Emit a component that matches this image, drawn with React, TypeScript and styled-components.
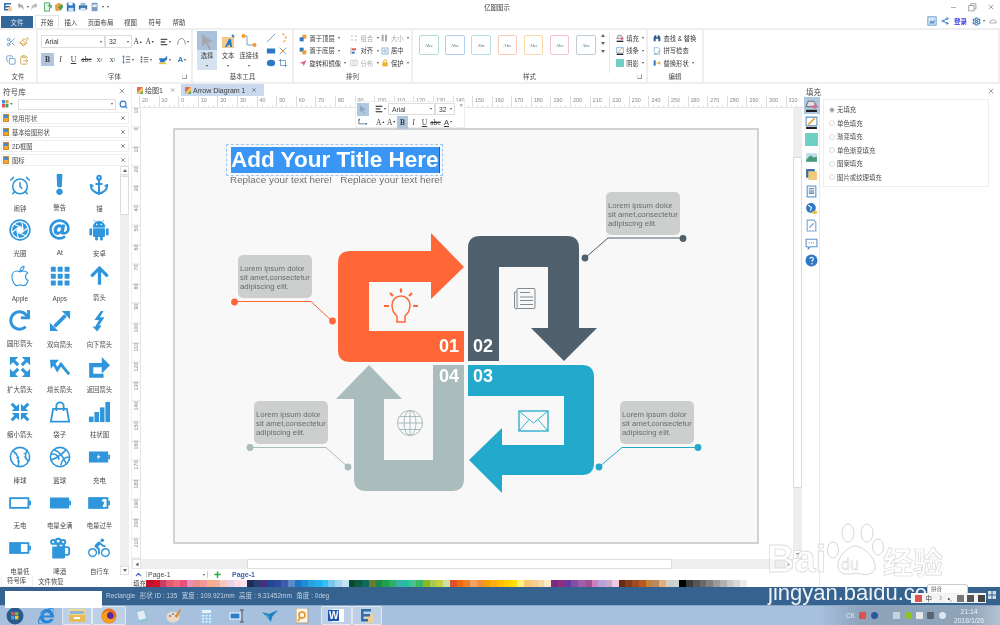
import React from "react";
import styled, { createGlobalStyle } from "styled-components";
import { AlarmClock, Anchor, Scissors, Paintbrush, Copy, ClipboardPaste, Search, X, Settings, Share2, ChevronUp, Plus, Minus } from "lucide-react";
import { FaExclamation, FaAt, FaApple, FaArrowUp, FaRedo, FaInternetExplorer } from "react-icons/fa";
import { MdDirectionsBike } from "react-icons/md";

const CJK = `"Liberation Sans", "Noto Sans CJK SC", sans-serif`;
const BLUE = "#2f96dc";

const Global = createGlobalStyle`
  html, body { margin: 0; padding: 0; background: #fff; }
  body { font-family: ${CJK}; width: 1000px; height: 625px; overflow: hidden; }
  * { box-sizing: border-box; }
`;

const Root = styled.div`
  position: relative; width: 1000px; height: 625px; overflow: hidden;
  display: flex; flex-direction: column; background: #fff; color: #3a3a3a;
  font-size: 6.4px; filter: blur(0.35px);
`;

/* ---------- title bar ---------- */
const TitleBar = styled.div`
  height: 14px; display: grid; grid-template-columns: 1fr auto 1fr; align-items: center; padding: 0 8px 0 2px; flex: none;
`;
const QuickBar = styled.div`
  display: flex; align-items: center;
`;
const QuickIcon = styled.span`
  width: 12px; height: 12px; display: inline-flex; align-items: center; justify-content: center; flex: none;
`;
const AppTitle = styled.div`
  font-size: 6.4px; color: #3a3a3a;
`;
const WinControls = styled.div`
  display: flex; color: #777; align-items: center; gap: 7px; justify-content: flex-end; margin-right: -5px;
`;
const WinBtn = styled.span`
  width: 12px; height: 12px; display: inline-flex; align-items: center; justify-content: center;
`;

/* ---------- tab row ---------- */
const TabRow = styled.div`
  height: 14px; display: flex; align-items: flex-end; flex: none; padding-left: 1px; font-size: 6.4px;
`;
const FileTab = styled.div`
  width: 32px; height: 12px; background: #336699; color: #dfe8f0; display: flex; align-items: center; justify-content: center;
`;
const MenuTab = styled.div<{ $active?: boolean; $w: number }>`
  width: ${(p) => p.$w}px; height: ${(p) => (p.$active ? 13 : 12)}px; display: flex; align-items: center; justify-content: center;
  color: #3a3a3a; background: #fff;
  ${(p) => p.$active && "border: 1px solid #e4e4e4; border-bottom: none;"}
`;
const RightTools = styled.div`
  margin-left: auto; display: flex; align-items: center; height: 14px; padding-right: 3px; color: #3f7fbf; gap: 4px;
`;
const Login = styled.span`
  color: #4343e6; font-weight: bold; font-size: 6.5px; margin: 0 1px;
`;

/* ---------- ribbon ---------- */
const Ribbon = styled.div`
  height: 56px; display: flex; border-top: 2px solid #efefef; border-bottom: 2px solid #efefef; flex: none;
`;
const Group = styled.div<{ $w?: number }>`
  ${(p) => (p.$w ? `width: ${p.$w}px; flex: none;` : "flex: 1;")}
  display: flex; flex-direction: column; border-right: 2px solid #efefef;
`;
const GroupBody = styled.div`
  flex: 1; display: flex; min-height: 0;
`;
const GroupLabel = styled.div`
  height: 12px; flex: none; display: grid; grid-template-columns: 1fr auto 1fr; align-items: center;
  color: #4a4a4a; font-size: 6.4px;
`;
const Launcher = styled.span`
  justify-self: end; margin-right: 4px; width: 5px; height: 5px; border: 1px solid #999; border-top-color: transparent; border-left-color: #ddd;
`;
const IconGrid = styled.div`
  display: grid; grid-template-columns: 13px 13px; grid-auto-rows: 18px; padding: 3px 0 0 4px; align-items: center; justify-items: center; color: #5b93c9;
`;
const SmallShapes = styled(IconGrid)`
  padding: 2px 0 0 6px; grid-auto-rows: 12.6px; grid-template-columns: 12px 12px;
`;
const FontRows = styled.div`
  display: flex; flex-direction: column; gap: 5px; padding: 5px 0 0 3px;
`;
const FontRow = styled.div`
  display: flex; align-items: center; height: 13px;
`;
const Combo = styled.div<{ $w: number; $h?: number }>`
  width: ${(p) => p.$w}px; height: ${(p) => p.$h ?? 13}px; border: 1px solid #ddd; background: #fff; display: flex; align-items: center;
  justify-content: space-between; padding: 0 2px 0 3px; font-size: 6.8px; color: #3a3a3a; flex: none;
`;
const Caret = styled.i<{ $ml?: number; $mr?: number }>`
  display: inline-block; width: 0; height: 0; border-left: 1.6px solid transparent; border-right: 1.6px solid transparent;
  border-top: 2px solid #555; margin-left: ${(p) => p.$ml ?? 1}px; margin-right: ${(p) => p.$mr ?? 0}px; flex: none;
`;
const FmtBtn = styled.span<{ $w?: number; $on?: boolean; $bold?: boolean; $it?: boolean; $u?: boolean; $strike?: boolean; $sans?: boolean; $c?: string }>`
  width: ${(p) => p.$w ?? 13}px; height: 13px; display: inline-flex; align-items: center; justify-content: center; flex: none;
  background: ${(p) => (p.$on ? "#aec6de" : "transparent")}; color: ${(p) => p.$c ?? "#3a3a3a"}; font-size: 7.5px;
  font-weight: ${(p) => (p.$bold ? "bold" : "normal")}; font-style: ${(p) => (p.$it ? "italic" : "normal")};
  text-decoration: ${(p) => (p.$u ? "underline" : p.$strike ? "line-through" : "none")};
  font-family: ${(p) => (p.$sans ? `"Liberation Sans", sans-serif` : `"Liberation Serif", serif`)};
`;
const Mini = styled.sup`
  font-size: 3.5px; line-height: 0;
`;
const Lower = styled.sub`
  font-size: 4px; line-height: 0;
`;
const BigTools = styled.div`
  display: flex; padding: 1px 0 0 4px;
`;
const BigTool = styled.div<{ $w: number; $on?: boolean }>`
  width: ${(p) => p.$w}px; height: 39px; display: flex; flex-direction: column; align-items: center; color: #3a3a3a; font-size: 6.3px;
  background: ${(p) => (p.$on ? "linear-gradient(#a9c1da 0 19px, #d5e2ef 19px)" : "transparent")};
`;
const BigIcon = styled.div`
  height: 20px; width: 100%; display: flex; align-items: center; justify-content: center;
`;
const BigText = styled.div`
  height: 10px; line-height: 10px; white-space: nowrap;
`;
const BigCaret = styled.div`
  height: 9px; display: flex; align-items: center; justify-content: center;
`;
const TriCols = styled.div`
  display: grid; grid-template-columns: 51px 30.5px 30px; grid-auto-rows: 12.6px; padding: 2px 0 0 5px; align-items: center;
`;
const LabelledTool = styled.div<{ $off?: boolean }>`
  display: flex; align-items: center; gap: 2.5px; font-size: 6.3px; white-space: nowrap; color: ${(p) => (p.$off ? "#aaa" : "#3a3a3a")};
`;
const StyleRow = styled.div`
  display: flex; gap: 6.7px; padding: 5px 0 0 6px;
`;
const StyleBox = styled.div<{ $c: string }>`
  width: 19.5px; height: 20px; border: 1px solid ${(p) => p.$c}; border-radius: 2px; display: flex; align-items: center; justify-content: center;
  font-size: 4.6px; color: #7b9aa8; font-weight: bold; font-family: "Liberation Serif", serif;
`;
const StyleScroll = styled.div`
  width: 12px; padding: 4px 0 0 5px; display: flex; flex-direction: column; gap: 5px;
`;
const StyleDot = styled.i<{ $up?: boolean; $turn?: number }>`
  display: block; width: 0; height: 0; border-left: 2px solid transparent; border-right: 2px solid transparent;
  ${(p) => (p.$up ? "border-bottom: 3px solid #666;" : "border-top: 3px solid #666;")}
  transform: rotate(${(p) => p.$turn ?? 0}deg);
`;
const VSep = styled.div`
  width: 1px; height: 40px; background: #e6e6e6; margin: 3px 0 0 1px;
`;
const ToolCol = styled.div<{ $pad: string }>`
  display: grid; grid-auto-rows: 12.6px; padding: ${(p) => p.$pad}; align-items: center;
`;

/* ---------- workspace ---------- */
const Workspace = styled.div`
  flex: 1; min-height: 0; display: flex; position: relative;
`;
const LeftPanel = styled.div`
  width: 132px; flex: none; display: flex; flex-direction: column; border-right: 1px solid #f0f0f0;
`;
const PanelHead = styled.div`
  height: 13px; flex: none; display: flex; align-items: center; justify-content: space-between; padding: 1px 5px 0 3px; font-size: 7.6px; color: #4a4a4a;
`;
const SearchRow = styled.div`
  height: 14px; flex: none; display: flex; align-items: center; padding: 0 3px 0 2px;
`;
const SearchBox = styled.div`
  width: 99px; height: 11px; margin-left: 4px; border: 1px solid #ddd; display: flex; justify-content: flex-end; align-items: center; padding-right: 2px;
`;
const SearchGlyph = styled(Search)`
  margin-left: 3px;
`;
const CatList = styled.div`
  padding-top: 1px; display: flex; flex-direction: column; gap: 2px; flex: none;
`;
const CatRow = styled.div`
  height: 12px; margin: 0 2px 0 1px; display: flex; align-items: center; gap: 3px; border: 1px solid #eee; background: #fff; font-size: 6.3px; color: #4a4a4a; padding: 0 2px 0 1px;
`;
const CatName = styled.span`
  flex: 1;
`;
const CatIcon = styled.i`
  width: 6px; height: 8px; background: linear-gradient(#3c8fd6 0 55%, #f3a63b 55%); display: block; flex: none; border: 1px solid #c88a2c;
`;
const SymbolArea = styled.div`
  flex: 1; min-height: 0; display: flex;
`;
const SymbolGrid = styled.div`
  width: 120px; flex: none; display: grid; grid-template-columns: repeat(3, 39.8px); grid-auto-rows: 45.4px;
`;
const SymbolCell = styled.div`
  display: flex; flex-direction: column; align-items: center; padding-top: 8px; color: #4a4a4a; font-size: 6.4px;
`;
const SymbolIcon = styled.div`
  width: 22px; height: 22px; color: ${BLUE}; display: flex; align-items: center; justify-content: center;
`;
const SymbolLabel = styled.div`
  margin-top: 7.5px; white-space: nowrap; line-height: 9px;
`;
const VScroll = styled.div<{ $mr?: number }>`
  width: 9px; flex: none; background: #eeeeee; display: flex; flex-direction: column; align-items: stretch; margin-right: ${(p) => p.$mr ?? 0}px;
`;
const ScrollBtn = styled.div<{ $end?: boolean }>`
  height: 9px; background: #fff; border: 1px solid #e0e0e0; display: flex; align-items: center; justify-content: center; flex: none;
  ${(p) => p.$end && "margin-top: auto;"}
`;
const ScrollThumb = styled.div<{ $mt: number; $h: number }>`
  margin-top: ${(p) => p.$mt}px; height: ${(p) => p.$h}px; background: #fff; border: 1px solid #dcdcdc; flex: none;
`;
const BottomTabs = styled.div`
  height: 12px; flex: none; display: flex; align-items: center; font-size: 6.4px; color: #4a4a4a;
`;
const BottomTab = styled.div<{ $on?: boolean }>`
  height: 12px; display: flex; align-items: center; padding: 0 6px 0 5px;
  ${(p) => p.$on && "border: 1px solid #eee; border-top: none; background: #fff; margin-left: 1px;"}
`;

/* ---------- centre ---------- */
const Centre = styled.div`
  width: 672px; flex: none; display: flex; flex-direction: column; position: relative;
`;
const DocTabs = styled.div`
  height: 12px; flex: none; display: flex; font-size: 7px; padding-left: 3px; color: #3a3a3a;
`;
const DocTab = styled.div<{ $w: number; $on?: boolean; $pl: number }>`
  width: ${(p) => p.$w}px; height: 12px; display: flex; align-items: center; padding-left: ${(p) => p.$pl}px; gap: 2px;
  margin-right: 6px; background: ${(p) => (p.$on ? "#c9d9ee" : "transparent")}; white-space: nowrap;
`;
const DocIcon = styled.i`
  display: block; width: 6px; height: 7px; background: linear-gradient(135deg, #e06a5c 0 40%, #f0c060 40% 70%, #6aa860 70%); flex: none;
`;
const DocClose = styled(X)<{ $ml: number }>`
  margin-left: ${(p) => p.$ml}px;
`;
const RulerH = styled.div`
  height: 12px; flex: none; display: flex; overflow: hidden; padding-left: 7px; border-bottom: 1px solid #e5e5e5;
`;
const RulerCell = styled.div`
  width: 19.6px; flex: none; height: 12px; border-left: 1px solid #ddd; font-size: 5.4px; color: #888; padding: 1px 0 0 2px; line-height: 7px;
  background: repeating-linear-gradient(90deg, transparent 0 3.9px, #e4e4e4 3.9px 4.9px) 0 9px / 100% 3px no-repeat;
`;
const Middle = styled.div`
  flex: 1; min-height: 0; display: flex; 
`;
const RulerV = styled.div`
  width: 9px; flex: none; overflow: hidden; border-right: 1px solid #e5e5e5; display: flex; flex-direction: column;
`;
const RulerVCell = styled.div`
  height: 19.6px; flex: none; border-top: 1px solid #ddd; font-size: 5.4px; color: #888; writing-mode: vertical-rl; transform: rotate(180deg);
  line-height: 9px; text-align: right;
`;
const CanvasArea = styled.div`
  flex: 1; min-width: 0; padding: 20px 0 0 32px; background: #fff;
`;
const Page = styled.div`
  position: relative; width: 586px; height: 416px; background: #f8f8f8; border: 2px solid #d2d2d2; overflow: hidden;
`;
const DiagramSvg = styled.svg`
  position: absolute; left: -2px; top: -2px; width: 586px; height: 416px;
`;
const Callout = styled.div<{ $x: number; $y: number }>`
  position: absolute; left: ${(p) => p.$x - 175}px; top: ${(p) => p.$y - 130}px; width: 74px; height: 43px;
  background: #cdcfcf; border-radius: 5px; padding: 9px 0 0 2px; font-size: 7.8px; line-height: 9px; color: #6b6b6b; white-space: nowrap;
`;
const StepNum = styled.div<{ $x: number; $y: number }>`
  position: absolute; left: ${(p) => p.$x - 175}px; top: ${(p) => p.$y - 130}px; width: 30px; height: 20px; text-align: center;
  color: #fff; font-weight: bold; font-size: 18px; line-height: 20px;
`;
const TitleFrame = styled.div`
  position: absolute; left: 51px; top: 14px; width: 217px; height: 32px; border: 1px dashed #9cc7f0; padding: 2px 0 0 4px;
`;
const TitleText = styled.span`
  display: inline-block; height: 26px; line-height: 26px; font-size: 22.5px; font-weight: bold; color: #fff; background: #3a96f5; border-right: 1px solid #555;
  white-space: nowrap;
`;
const SubTitle = styled.div`
  position: absolute; left: 55px; top: 44px; font-size: 9.9px; line-height: 12px; color: #707070; white-space: pre;
`;
const MiniBar = styled.div`
  position: absolute; left: 223px; top: 17px; width: 110px; height: 27px; background: #fff; border: 1px solid #eee; display: grid;
  grid-template-columns: 14px 1fr; z-index: 3;
`;
const MiniLeft = styled.div`
  display: flex; flex-direction: column;
`;
const MiniSel = styled.div`
  width: 12px; height: 13px; background: #aec6de; margin: 1px 0 0 1px; display: flex; align-items: center; justify-content: center;
`;
const MiniRight = styled.div`
  display: flex; flex-direction: column; padding: 1px 0 0 5px; gap: 1px;
`;
const MiniRow = styled.div`
  display: flex; align-items: center; height: 12px; font-size: 7px; color: #3a3a3a;
`;
const MiniClose = styled.span`
  position: absolute; right: 1px; top: 0; color: #777; font-size: 6px; line-height: 6px;
`;
const HScrollRow = styled.div`
  height: 10px; flex: none; display: flex; background: #eee; margin-right: 11px;
`;
const HArrow = styled.div`
  width: 9px; height: 10px; display: flex; align-items: center; justify-content: center; background: #fff; border: 1px solid #e4e4e4;
`;
const HThumb = styled.div`
  width: 425px; height: 10px; background: #fff; border: 1px solid #ddd; margin: 0 auto 0 106px;
`;
const PageBar = styled.div`
  height: 11px; flex: none; display: flex; align-items: center; padding-left: 2px; font-size: 7px; color: #4a4a4a;
`;
const PageCombo = styled.div`
  width: 62px; display: flex; justify-content: space-between; align-items: center; margin-left: 3px; border-left: 1px solid #ccc; border-right: 1px solid #ccc; padding: 0 2px 0 1px;
`;
const PagePlus = styled(Plus)`
  margin-left: 5px;
`;
const PageName = styled.span`
  color: #3f62b8; font-weight: bold; margin-left: 10px;
`;
const PaletteRow = styled.div`
  height: 7px; flex: none; display: flex; align-items: center;
`;
const PaletteLabel = styled.span`
  width: 14px; font-size: 6.4px; line-height: 7px; padding-left: 1px; color: #3a3a3a; flex: none; white-space: nowrap;
`;
const Swatch = styled.i<{ $c: string }>`
  width: 6.76px; height: 7px; flex: none; display: block; background: ${(p) => p.$c};
`;

/* ---------- right panel ---------- */
const RightPanel = styled.div`
  flex: 1; display: flex; flex-direction: column; min-width: 0;
`;
const RightHead = styled.div`
  height: 13px; flex: none; display: flex; align-items: center; justify-content: space-between; padding: 1px 5px 0 2px; font-size: 7.5px; color: #4a4a4a;
`;
const RightBody = styled.div`
  flex: 1; display: flex; min-height: 0;
`;
const Strip = styled.div`
  width: 16px; flex: none; border-right: 1px solid #eaeaea; display: flex; flex-direction: column; align-items: center;
`;
const StripBtn = styled.div<{ $on?: boolean }>`
  width: 16px; height: 17.2px; flex: none; display: flex; align-items: center; justify-content: center;
  background: ${(p) => (p.$on ? "#aec6de" : "transparent")};
`;
const FillOptions = styled.div`
  margin: 2px 0 0 3px; width: 166px; height: 88px; border: 1px solid #efefef; display: flex; flex-direction: column; padding: 3px 0 0 5px;
`;
const FillRow = styled.div`
  height: 13.5px; display: flex; align-items: center; gap: 2px; font-size: 6.4px; color: #4a4a4a;
`;
const Radio = styled.i<{ $on?: boolean }>`
  display: block; width: 6px; height: 6px; border-radius: 50%; border: 1px solid #ddd; background: ${(p) => (p.$on ? "radial-gradient(#999 0 1.5px, #eee 2px)" : "#fff")};
`;

/* ---------- status + taskbar ---------- */
const StatusBar = styled.div`
  height: 18px; flex: none; background: #35628f; display: flex; align-items: center; padding-left: 106px; color: #c3d2e2; font-size: 6.5px; gap: 4.5px;
  white-space: nowrap; padding-bottom: 2px;
`;
const StatusRight = styled.div`
  margin-left: auto; display: flex; align-items: center; padding-right: 4px;
`;
const Taskbar = styled.div`
  height: 20px; flex: none; display: flex; align-items: center; border-top: 1px solid #8ba6c3;
  background: linear-gradient(90deg, #a7c0dd 0 82%, #8da4bb 86%, #8ea3b8 97%, #b6c4d2);
`;
const TaskItem = styled.div<{ $on?: boolean; $w?: number; $ml?: number }>`
  width: ${(p) => p.$w ?? 32}px; height: 19px; margin-left: ${(p) => p.$ml ?? 0}px; flex: none; display: flex; align-items: center; justify-content: center;
  ${(p) => p.$on && "background: rgba(255,255,255,.25); border: 1px solid rgba(255,255,255,.55); border-radius: 2px;"}
`;
const Tray = styled.div`
  margin-left: auto; display: flex; align-items: center; color: #e8eef3; font-size: 6.4px;
`;
const TrayText = styled.span`
  margin-right: 2px;
`;
const TrayDot = styled.i<{ $c: string; $sq?: boolean }>`
  display: block; width: 7px; height: 7px; margin: 0 2.2px; background: ${(p) => p.$c}; border-radius: ${(p) => (p.$sq ? "1px" : "50%")};
`;
const Clock = styled.div`
  width: 40px; margin: 0 11px 0 1px; text-align: center; line-height: 9px; font-size: 6.8px; color: #eef2f6;
`;

/* ---------- overlays ---------- */
const Redact = styled.div`
  position: absolute; left: 5px; top: 591px; width: 97px; height: 17px; background: #fff; z-index: 5;
`;
const Mark = styled.div`
  position: absolute; left: 0; top: 0; width: 1000px; height: 625px; pointer-events: none; z-index: 6;
`;
const PawSvg = styled.svg`
  position: absolute; left: 826px; top: 519px; width: 60px; height: 60px;
`;
const MarkBai = styled.div`
  position: absolute; left: 767px; top: 538px; font-size: 38px; line-height: 42px; font-weight: bold; color: rgba(255,255,255,.55);
  -webkit-text-stroke: .8px #dcdcdc;
`;
const MarkDu = styled.div`
  position: absolute; left: 841px; top: 556px; font-size: 16px; line-height: 18px; color: rgba(255,255,255,.6); -webkit-text-stroke: .6px #d8d8d8;
`;
const MarkCn = styled.div`
  position: absolute; left: 883px; top: 543px; font-size: 30px; line-height: 34px; color: rgba(255,255,255,.6); -webkit-text-stroke: .7px #d8d8d8; white-space: nowrap;
  font-family: "Noto Sans CJK SC", sans-serif; font-weight: bold;
`;
const MarkUrl = styled.div`
  position: absolute; left: 768px; top: 580px; font-size: 22px; line-height: 26px; color: rgba(255,255,255,.92); white-space: nowrap;
`;
const ImeTip = styled.div`
  position: absolute; left: 927px; top: 584px; width: 41px; height: 10px; background: #fff; border: 1px solid #ccc; border-radius: 2px; font-size: 5.5px; line-height: 8px; padding-left: 3px; color: #666; z-index: 7;
`;
const ImeBar = styled.div`
  position: absolute; left: 911px; top: 593px; width: 75px; height: 10px; background: #f4f4f4; z-index: 7; display: flex; align-items: center; padding-left: 2px; font-size: 6.4px; color: #3a3a3a;
`;
const ImeCell = styled.span`
  width: 10.5px; display: flex; justify-content: center; align-items: center; flex: none;
`;
const ImeDot = styled.i<{ $c: string }>`
  display: block; width: 7px; height: 7px; background: ${(p) => p.$c};
`;

/* ---------- small drawn icons ---------- */
const Tiny = ({ c = "#5b93c9", s = 8, children }: { c?: string; s?: number; children: React.ReactNode }) => (
  <svg width={s} height={s} viewBox="0 0 12 12" fill={c} stroke="none" style={{ flex: "none" }}>{children}</svg>
);
const FrontIcon = () => <Tiny><rect x="5" y="1" width="6" height="6" fill="#e9a23b" /><rect x="1" y="5" width="6" height="6" fill="#2f78c4" /></Tiny>;
const BackIcon = () => <Tiny><rect x="1" y="1" width="6" height="6" fill="#2f78c4" /><rect x="5" y="5" width="6" height="6" fill="#e9a23b" /></Tiny>;

const Grid9 = () => (
  <svg viewBox="0 0 24 24" width="22" height="22" fill="currentColor">
    {[2, 9.5, 17].flatMap((y) => [2, 9.5, 17].map((x) => <rect key={x + "," + y} x={x} y={y} width="5.4" height="5.4" rx=".6" />))}
  </svg>
);
const Svg24 = ({ children }: { children: React.ReactNode }) => (
  <svg viewBox="0 0 24 24" width="22" height="22" fill="currentColor" stroke="none">{children}</svg>
);
const ApertureIcon = () => (
  <Svg24>
    <circle cx="12" cy="12" r="10.800" fill="none" stroke="currentColor" strokeWidth="1.800" />
    <circle cx="12" cy="12" r="8.500" />
    <g stroke="#fff" strokeWidth="1.200" fill="none">
      {[0, 60, 120, 180, 240, 300].map((a) => <path key={a} d="M15.500 12L14 3" transform={`rotate(${a} 12 12)`} />)}
    </g>
    <circle cx="12" cy="12" r="3.400" fill="#fff" />
  </Svg24>
);
const AndroidIcon = () => (
  <Svg24>
    <path d="M5.500 9a6.500 6.500 0 0 1 13 0zM8 3L6.500 1M16 3l1.500-2" stroke="currentColor" strokeWidth=".8" />
    <rect x="5.500" y="10" width="13" height="9.500" rx="1" />
    <rect x="1.500" y="10" width="3" height="8" rx="1.500" />
    <rect x="19.500" y="10" width="3" height="8" rx="1.500" />
    <rect x="7.800" y="18" width="3" height="5.500" rx="1.400" />
    <rect x="13.200" y="18" width="3" height="5.500" rx="1.400" />
    <circle cx="9.500" cy="6" r=".9" fill="#fff" />
    <circle cx="14.500" cy="6" r=".9" fill="#fff" />
  </Svg24>
);
const BeerIcon = () => (
  <Svg24>
    <rect x="3.500" y="7" width="14" height="16.500" rx="1.200" />
    <path d="M17 11h3a2 2 0 0 1 2 2v4.500a2 2 0 0 1-2 2h-3" fill="none" stroke="currentColor" strokeWidth="2" />
    <circle cx="4.500" cy="5.500" r="3.300" />
    <circle cx="10" cy="4.500" r="3.800" />
    <circle cx="15.500" cy="5.500" r="3.300" />
    <circle cx="4.500" cy="5.500" r="1.200" fill="#fff" />
    <circle cx="10" cy="4.500" r="1.500" fill="#fff" />
    <circle cx="15.500" cy="5.500" r="1.200" fill="#fff" />
    <path d="M3.500 8.500h5v2h-5z" fill="#fff" />
    <path d="M11.500 8.500h3v1.500h-3z" fill="#fff" />
  </Svg24>
);
const Arrow2 = () => <Svg24><path d="M14 1h9v9zM1 14v9h9z" /><path d="M6 18L18 6" stroke="currentColor" strokeWidth="4" /></Svg24>;
const Bolt = () => <Svg24><path d="M14 1L7 11h5L8 18H5l5 5.500 5-6.500h-3l6-9h-5l4-7z" /></Svg24>;
const Expand = () => (
  <Svg24>
    <path d="M1 1h9L1 10zM23 1v9l-9-9zM1 23v-9l9 9zM23 23h-9l9-9z" />
    <path d="M4 4l6 6M20 4l-6 6M4 20l6-6M20 20l-6-6" stroke="currentColor" strokeWidth="3.4" />
  </Svg24>
);
const Compress = () => (
  <Svg24>
    <path d="M11 11H3l8-8zM13 11h8l-8-8zM11 13H3l8 8zM13 13h8l-8 8z" />
    <path d="M3 3l5 5M21 3l-5 5M3 21l5-5M21 21l-5-5" stroke="currentColor" strokeWidth="3.4" />
  </Svg24>
);
const Growth = () => <Svg24><path d="M1 4h10L2 14z" /><path d="M5 8l4 7 4-6 9 11" stroke="currentColor" strokeWidth="3.2" fill="none" /></Svg24>;
const Return = () => <Svg24><path d="M15 1l9 9-9 9z" /><path d="M17 21.500H3.500V10H16" stroke="currentColor" strokeWidth="4.500" fill="none" /></Svg24>;
const Bag = () => (
  <Svg24>
    <path d="M4.500 8.500h15l2.500 14H2zM8 11V5.500a4 4 0 0 1 8 0V11" fill="none" stroke="currentColor" strokeWidth="2" />
  </Svg24>
);
const Bars = () => <Svg24><rect x="1" y="17" width="5" height="6" /><rect x="7" y="12" width="5" height="11" /><rect x="13" y="7" width="5" height="16" /><rect x="19" y="1" width="5" height="22" /></Svg24>;
const Baseball = () => (
  <Svg24>
    <g fill="none" stroke="currentColor" strokeWidth="1.700">
      <circle cx="12" cy="12" r="10.500" />
      <path d="M4 5c5 3 8 8 6 18M20 4c-3 6-3 11 2 12" />
      <path d="M6 9l2-1.500M8 13l2.500-1M9 17l2.500 0M16 8l2 1M16 12l2 0" strokeWidth="1.200" />
    </g>
  </Svg24>
);
const Basket = () => (
  <Svg24>
    <g fill="none" stroke="currentColor" strokeWidth="1.700">
      <circle cx="12" cy="12" r="10.500" />
      <path d="M5 4c5 1 10 6 14 16M19 4c-5 5-10 10-17 11M2 9c5-1 8 1 9 6M22 12c-5 0-8 3-9 9" />
    </g>
  </Svg24>
);
const Battery = ({ kind }: { kind: "charge" | "none" | "full" | "half" | "low" }) => (
  <Svg24>
    <rect x="22" y="9.500" width="2" height="5" />
    {kind === "none" && <rect x="1.200" y="6.700" width="20" height="10.600" fill="none" stroke="currentColor" strokeWidth="2" />}
    {kind === "full" && <rect x="1" y="6" width="21" height="12" />}
    {kind === "charge" && <g><rect x="1" y="6" width="21" height="12" /><path d="M12.500 8l-3 4.500h2l-1 3 3-4.500h-2z" fill="#fff" /></g>}
    {kind === "half" && <g><rect x="1.200" y="6.700" width="20" height="10.600" fill="none" stroke="currentColor" strokeWidth="2" /><path d="M1 6h16l-2 4 3 1-3 7H1z" /></g>}
    {kind === "low" && <g><rect x="1.200" y="6.700" width="20" height="10.600" fill="none" stroke="currentColor" strokeWidth="2" /><rect x="1" y="6" width="12" height="12" /></g>}
  </Svg24>
);

const symbols: { label: string; icon: React.ReactNode }[] = [
  { label: "闹钟", icon: <AlarmClock size={23} strokeWidth={1.7} /> },
  { label: "警告", icon: <FaExclamation size={21} /> },
  { label: "锚", icon: <Anchor size={22} strokeWidth={2.2} /> },
  { label: "光圈", icon: <ApertureIcon /> },
  { label: "At", icon: <FaAt size={21} /> },
  { label: "安卓", icon: <AndroidIcon /> },
  { label: "Apple", icon: <FaApple size={22} fill="none" stroke="currentColor" strokeWidth={26} /> },
  { label: "Apps", icon: <Grid9 /> },
  { label: "箭头", icon: <FaArrowUp size={21} /> },
  { label: "圆形箭头", icon: <FaRedo size={21} /> },
  { label: "双向箭头", icon: <Arrow2 /> },
  { label: "向下箭头", icon: <Bolt /> },
  { label: "扩大箭头", icon: <Expand /> },
  { label: "增长箭头", icon: <Growth /> },
  { label: "返回箭头", icon: <Return /> },
  { label: "缩小箭头", icon: <Compress /> },
  { label: "袋子", icon: <Bag /> },
  { label: "柱状图", icon: <Bars /> },
  { label: "棒球", icon: <Baseball /> },
  { label: "篮球", icon: <Basket /> },
  { label: "充电", icon: <Battery kind="charge" /> },
  { label: "无电", icon: <Battery kind="none" /> },
  { label: "电量全满", icon: <Battery kind="full" /> },
  { label: "电量过半", icon: <Battery kind="half" /> },
  { label: "电量低", icon: <Battery kind="low" /> },
  { label: "啤酒", icon: <BeerIcon /> },
  { label: "自行车", icon: <MdDirectionsBike size={24} /> },
];

const palette = [
  "#c0102a", "#d4112a", "#c8406a", "#e65a6e", "#f06a7a", "#e8507f", "#e593b5", "#f08a8a", "#f4979a", "#f8ad8c", "#f7b09a", "#f4c7c0", "#ead3e8", "#fadbe8", "#fce4ec",
  "#1a2f5e", "#2a3e70", "#4a2f8a", "#1e4a90", "#2e4a9c", "#3d5cb0", "#5a8ac8", "#1878c8", "#1e8cd6", "#2aa0dc", "#22b0f0", "#30c0f8", "#7cc4ec", "#a0d4f0", "#c4e4f4",
  "#0a4a2e", "#0f5a3a", "#0c6a5e", "#6a7a2a", "#1a8a4a", "#1f9f50", "#2ab060", "#38b0a8", "#20c0a0", "#48c090", "#38b860", "#8ab820", "#a8c850", "#c0d040", "#c8e0b0",
  "#e0502a", "#f06a10", "#f08028", "#f4a060", "#f09040", "#f8a000", "#fcb010", "#ffc000", "#ffd000", "#ffe000", "#fff080", "#f8c870", "#f0d090", "#f8d8a0", "#fde8c8",
  "#7a2a80", "#8a3088", "#6a3aa0", "#8050a8", "#a060a8", "#a05098", "#d080b8", "#b8a0d8", "#c8a8d0", "#f0c8e0",
  "#6a2a14", "#8a3a20", "#a04a20", "#b85a20", "#c88040", "#b88860", "#e0b078", "#d0d0c8", "#c8d8d0",
  "#000000", "#3a3a3a", "#555555", "#6a6a6a", "#808080", "#9a9a9a", "#b0b0b0", "#c8c8c8", "#d8d8d8", "#ececec",
];

const hRuler = [20, 10, 0, ...Array.from({ length: 31 }, (_, i) => (i + 1) * 10)];
const vRuler = [10, 0, ...Array.from({ length: 21 }, (_, i) => (i + 1) * 10)];

const Diagram = () => (
  <DiagramSvg viewBox="173 128 586 416">
    <path fill="#ff6738" d="M350 251H431V233L464 267L431 299V282H369V331H464V362H350Q338 362 338 350V263Q338 251 350 251Z" />
    <path fill="#4f5f6b" d="M480 236H567Q579 236 579 248V328H597L564 361L531 328H548V267H499V361H468V248Q468 236 480 236Z" />
    <path fill="#22a9cb" d="M468 365H582Q594 365 594 377V463Q594 475 582 475H502V493L469 460L502 428V445H564V396H468Z" />
    <path fill="#abbcbc" d="M433 365H464V479Q464 491 452 491H366Q354 491 354 479V399H336L369 365L402 399H384V460H433Z" />
    <g fill="none" strokeWidth="1">
      <path stroke="#ff6738" d="M234 301.500H311L332 321" />
      <path stroke="#4f5f6b" d="M585 258L608 238H683" />
      <path stroke="#abbcbc" d="M250 447.500H326L348 467" />
      <path stroke="#22a9cb" d="M599 467L622 447.500H698" />
    </g>
    <circle cx="234.500" cy="302" r="3.400" fill="#ff6738" />
    <circle cx="332.500" cy="321" r="3.400" fill="#ff6738" />
    <circle cx="585" cy="258" r="3.400" fill="#4f5f6b" />
    <circle cx="683" cy="238.500" r="3.400" fill="#4f5f6b" />
    <circle cx="250" cy="447.500" r="3.400" fill="#abbcbc" />
    <circle cx="348" cy="467" r="3.400" fill="#abbcbc" />
    <circle cx="599" cy="467" r="3.400" fill="#22a9cb" />
    <circle cx="698" cy="447.500" r="3.400" fill="#22a9cb" />
    <g fill="none" stroke="#ff6738" strokeWidth="1.500">
      <path d="M397 322V316C392 312 392 308 392 305A9 9 0 0 1 410 305C410 308 410 312 405 316V322Z" />
      <path d="M401 288.500V292.500M390 293L393 296M412 293L409 296M384 306H389M413 306H418" strokeWidth="2.200" />
    </g>
    <g fill="none" stroke="#7f8a92" strokeWidth="1">
      <rect x="517" y="288.500" width="18" height="20" rx="1" />
      <path d="M517 292H514.500V307Q514.500 309 517 309" />
      <path d="M520 292.500H530M520 297H533M520 300.500H533M520 304.500H533" />
    </g>
    <g fill="none" stroke="#a3b6b6" strokeWidth=".9">
      <circle cx="410" cy="423" r="12.500" />
      <ellipse cx="410" cy="423" rx="6" ry="12.500" />
      <path d="M410 410.500V435.500M397.500 423H422.500M399.500 416.500H420.500M399.500 429.500H420.500" />
    </g>
    <g fill="none" stroke="#22a9cb" strokeWidth="1.300">
      <rect x="519" y="411" width="29" height="20" />
      <path d="M519.500 411.500L533.500 423L547.500 411.500M519.500 430.500L529 419.500M547.500 430.500L538 419.500" strokeWidth=".9" />
    </g>
  </DiagramSvg>
);

const TaskIcon = ({ kind }: { kind: string }) => {
  switch (kind) {
    case "start":
      return <svg width="18" height="18" viewBox="0 0 16 16"><circle cx="8" cy="8" r="7.500" fill="#2a5a8c" /><rect x="4.500" y="4.500" width="3" height="3" fill="#e0533a" /><rect x="8" y="4.500" width="3" height="3" fill="#7ab648" /><rect x="4.500" y="8" width="3" height="3" fill="#3f9fe0" /><rect x="8" y="8" width="3" height="3" fill="#f2c230" /></svg>;
    case "folder":
      return <svg width="18" height="15" viewBox="0 0 18 15"><rect x="1" y="1" width="16" height="13" fill="#f2d98a" /><rect x="2" y="3" width="14" height="3" fill="#8fb7d6" /><rect x="1" y="7" width="16" height="7" fill="#e9bb58" /><rect x="6" y="9" width="6" height="2" fill="#fff" /></svg>;
    case "firefox":
      return <svg width="16" height="16" viewBox="0 0 16 16"><circle cx="8" cy="8" r="7.500" fill="#f06a1d" /><circle cx="8.500" cy="8" r="4" fill="#5a2a9a" /><path d="M1 8a7 7 0 0 0 14 0c-2 3-6 4-8 2S6 5 9 3C5 2 2 5 1 8z" fill="#f8a01d" /></svg>;
    case "note":
      return <svg width="16" height="16" viewBox="0 0 16 16"><path d="M2 3l9-2 3 12-9 2z" fill="#8fc4d6" /><path d="M3 4l7-1.500 2 8-7 1.500z" fill="#e3eef2" /></svg>;
    case "paint":
      return <svg width="16" height="16" viewBox="0 0 16 16"><ellipse cx="7" cy="9" rx="6.500" ry="5.500" fill="#e8dcc6" /><circle cx="4" cy="8" r="1" fill="#e0533a" /><circle cx="7" cy="6" r="1" fill="#3f9fe0" /><circle cx="10" cy="8" r="1" fill="#7ab648" /><path d="M9 8l5-7 1 1-4 8z" fill="#d09030" /></svg>;
    case "calc":
      return <svg width="13" height="16" viewBox="0 0 13 16"><rect width="13" height="16" fill="#9fc5e8" /><rect x="2" y="2" width="9" height="3" fill="#e9f3fb" /><g fill="#f0f6fb">{[7, 10, 13].map((y) => [2, 5.5, 9].map((x) => <rect key={`${x}${y}`} x={x} y={y} width="2" height="1.500" />))}</g></svg>;
    case "cursor":
      return <svg width="18" height="14" viewBox="0 0 18 14"><rect x="1" y="4" width="10" height="6" fill="#2a7fd0" stroke="#fff" /><path d="M11 1h4M13 1v12M11 13h4" stroke="#555" fill="none" /></svg>;
    case "bird":
      return <svg width="18" height="14" viewBox="0 0 18 14"><path d="M1 3l7 2 9-4-6 7-1 5-3-4z" fill="#1c7fc4" /><path d="M4 5l4 2-1 3z" fill="#46b4c8" /></svg>;
    case "search":
      return <svg width="13" height="16" viewBox="0 0 13 16"><rect width="12" height="15" fill="#f8f4e8" stroke="#b0a080" /><circle cx="6" cy="7" r="3" fill="none" stroke="#e89020" strokeWidth="1.500" /><path d="M4 10l-2 3" stroke="#e89020" strokeWidth="1.500" /></svg>;
    case "word":
      return <svg width="17" height="15" viewBox="0 0 17 15"><rect x="4" y="1" width="12" height="13" fill="#fff" /><rect x="0" y="2" width="11" height="11" fill="#1a55b0" /><text x="1" y="11" fontSize="10" fontWeight="bold" fill="#fff" fontFamily="Liberation Sans">W</text></svg>;
    default:
      return <svg width="16" height="16" viewBox="0 0 16 16"><rect x="6" y="6" width="9" height="9" fill="#efcf97" /><path d="M2 1h10v2.500H4.500V6H11v2.500H4.500V11H9v2.500H2z" fill="#2f6ea8" /></svg>;
  }
};

const PaintIcon = ({ s }: { s: number }) => (
  <Tiny s={s}><path d="M3 2h5l3 5H1z" fill="#e3dfe8" stroke="#777" /><circle cx="9" cy="7" r="2" fill="#e46a93" /><rect x="1" y="10" width="10" height="2" fill="#222" /></Tiny>
);
const LineIcon = ({ s }: { s: number }) => (
  <Tiny s={s}><path d="M1 1h10v8H1z" fill="none" stroke="#5b93c9" /><path d="M3 8l6-6" stroke="#e9a23b" strokeWidth="1.500" /><rect x="1" y="10" width="10" height="2" fill="#222" /></Tiny>
);

const LOREM = <>Lorem ipsum dolor<br />sit amet,consectetur<br />adipiscing elit.</>;

export default function App() {
  return (
    <Root>
      <Global />
      <TitleBar>
        <QuickBar>
          <QuickIcon><svg width="10" height="10" viewBox="0 0 10 10"><path d="M1 1h7v1.500H2.500V4H7v1.500H2.500V7H5v1.500H1z" fill="#2f6ea8" /><rect x="5" y="5" width="4" height="4" fill="#efcf97" /></svg></QuickIcon>
          <QuickIcon><Tiny c="#aaa" s={10}><path d="M3 4l3-3v2c3 0 5 2 4 7-1-3-2-4-4-4v2z" /></Tiny></QuickIcon>
          <Caret />
          <QuickIcon><Tiny c="#bbb" s={10}><path d="M9 4L6 1v2C3 3 1 5 2 10c1-3 2-4 4-4v2z" /></Tiny></QuickIcon>
          <QuickIcon><Tiny c="#3aa55c" s={10}><path d="M3 1h6v4h2v2H9v4H3z" fill="#e7f3ea" stroke="#3aa55c" /><path d="M7 4h2V2h1v2h2v1h-2v2H9V5H7z" /></Tiny></QuickIcon>
          <QuickIcon><Tiny s={10}><path d="M1 4l5-3 4 2-1 7-7 1z" fill="#e9a23b" /><path d="M5 6l5-3 1 3-3 4z" fill="#3aa55c" /></Tiny></QuickIcon>
          <QuickIcon><Tiny c="#2f78c4" s={10}><path d="M1 1h8l2 2v8H1z" /><rect x="3" y="1" width="5" height="3" fill="#fff" /><rect x="3" y="7" width="6" height="4" fill="#cfe0f0" /></Tiny></QuickIcon>
          <QuickIcon><Tiny c="#3c6fa6" s={10}><rect x="3" y="1" width="6" height="3" fill="#9db9d6" /><rect x="1" y="4" width="10" height="5" /><rect x="3" y="7" width="6" height="4" fill="#d8e4f0" /></Tiny></QuickIcon>
          <QuickIcon><Tiny c="#7c9cc0" s={10}><rect x="2" y="1" width="7" height="10" /><rect x="3" y="3" width="5" height="3" fill="#e7eef6" /></Tiny></QuickIcon>
          <Caret /><Caret $ml={3} />
        </QuickBar>
        <AppTitle>亿图图示</AppTitle>
        <WinControls>
          <WinBtn><Minus size={7} /></WinBtn>
          <WinBtn><Tiny c="#999" s={9}><rect x="1" y="3.500" width="7" height="7" fill="none" stroke="#888" /><path d="M3.500 3V1h7v7H8.500" fill="none" stroke="#888" /></Tiny></WinBtn>
          <WinBtn><X size={8} /></WinBtn>
        </WinControls>
      </TitleBar>
      <TabRow>
        <FileTab>文件</FileTab>
        <MenuTab $w={2} />
        <MenuTab $w={24} $active>开始</MenuTab>
        <MenuTab $w={24}>插入</MenuTab>
        <MenuTab $w={35}>页面布局</MenuTab>
        <MenuTab $w={25}>视图</MenuTab>
        <MenuTab $w={24}>符号</MenuTab>
        <MenuTab $w={24}>帮助</MenuTab>
        <RightTools>
          <Tiny c="#5b93c9" s={10}><rect x="1" y="1" width="10" height="10" fill="#d8e7f5" stroke="#5b93c9" /><path d="M3 8l2-3 2 2 2-3v5H3z" /></Tiny>
          <Share2 size={8} strokeWidth={2.6} />
          <Login>登录</Login>
          <Settings size={9} strokeWidth={3} />
          <Caret $ml={-2} />
          <Tiny c="#aaa" s={8}><path d="M1 9a5 5 0 0 1 10 0z" fill="none" stroke="#888" /></Tiny>
        </RightTools>
      </TabRow>
      <Ribbon>
        <Group $w={38}>
          <GroupBody>
            <IconGrid>
              <Scissors size={10} />
              <Paintbrush size={10} color="#d19a2c" />
              <Copy size={10} />
              <ClipboardPaste size={10} color="#c9a046" />
            </IconGrid>
          </GroupBody>
          <GroupLabel><span /><span>文件</span><span /></GroupLabel>
        </Group>
        <Group $w={155}>
          <GroupBody>
            <FontRows>
              <FontRow>
                <Combo $w={64}><span>Arial</span><Caret /></Combo>
                <Combo $w={27}><span>32</span><Caret /></Combo>
                <FmtBtn $w={12}>A<Mini>▲</Mini></FmtBtn>
                <FmtBtn $w={12}>A<Mini>▼</Mini></FmtBtn>
                <FmtBtn $w={18}><Tiny c="#555"><path d="M1 1h10v2H1zM1 5h7v2H1zM1 9h10v2H1z" /></Tiny><Caret /></FmtBtn>
                <FmtBtn $w={18}><Tiny c="#555" s={9}><path d="M1 10C1 4 4 2 6 2s5 2 5 8" fill="none" stroke="#666" /></Tiny><Caret /></FmtBtn>
              </FontRow>
              <FontRow>
                <FmtBtn $on $bold>B</FmtBtn>
                <FmtBtn $it>I</FmtBtn>
                <FmtBtn $u>U</FmtBtn>
                <FmtBtn $strike>abc</FmtBtn>
                <FmtBtn>x<Lower>2</Lower></FmtBtn>
                <FmtBtn>x<Mini>2</Mini></FmtBtn>
                <FmtBtn $w={18}><Tiny c="#3c6fa6" s={9}><path d="M2 1v10M1 3l1-2 1 2M1 9l1 2 1-2" fill="none" stroke="#3c6fa6" /><path d="M5 2h6v1H5zM5 5.500h6v1H5zM5 9h6v1H5z" fill="#555" /></Tiny><Caret /></FmtBtn>
                <FmtBtn $w={18}><Tiny c="#555" s={9}><path d="M1 2h2v2H1zM1 5h2v2H1zM1 8h2v2H1zM5 2.500h6v1H5zM5 5.500h6v1H5zM5 8.500h6v1H5z" /></Tiny><Caret /></FmtBtn>
                <FmtBtn $w={18}><Tiny c="#2f78c4" s={10}><path d="M1 4h7l3-3v4L7 9H3z" /><path d="M1 9h9v2H1z" fill="#e9c23b" /></Tiny><Caret /></FmtBtn>
                <FmtBtn $w={18} $sans $bold $c="#2f78c4">A<Caret /></FmtBtn>
              </FontRow>
            </FontRows>
          </GroupBody>
          <GroupLabel><span /><span>字体</span><Launcher /></GroupLabel>
        </Group>
        <Group $w={101}>
          <GroupBody>
            <BigTools>
              <BigTool $w={20} $on>
                <BigIcon><svg width="15" height="17" viewBox="0 0 15 17"><path d="M2 1l11 8-5 .5 3 6-2 1-3-6-4 3z" fill="#a4a8ae" /></svg></BigIcon>
                <BigText>选择</BigText><BigCaret><Caret $ml={0} /></BigCaret>
              </BigTool>
              <BigTool $w={22}>
                <BigIcon><svg width="15" height="15" viewBox="0 0 15 15"><rect x="1" y="3" width="12" height="11" fill="#f1c98a" /><path d="M4 13L8 5h2l1 8H9V11H7l-1 2z" fill="#2f78c4" /><path d="M11 1l2 2" stroke="#2f78c4" strokeWidth="2" /></svg></BigIcon>
                <BigText>文本</BigText><BigCaret><Caret $ml={0} /></BigCaret>
              </BigTool>
              <BigTool $w={20}>
                <BigIcon><svg width="16" height="16" viewBox="0 0 16 16"><path d="M2.500 3H6v9h7" fill="none" stroke="#7ba4cf" /><circle cx="2.500" cy="3" r="2" fill="#f39c2b" /><circle cx="13.500" cy="12" r="2" fill="#f39c2b" /></svg></BigIcon>
                <BigText>连接线</BigText><BigCaret><Caret $ml={0} /></BigCaret>
              </BigTool>
            </BigTools>
            <SmallShapes>
              <Tiny s={10}><path d="M1 11L11 1" stroke="#5b93c9" fill="none" /></Tiny>
              <Tiny c="#f39c2b" s={10}><path d="M5 1c6 1 6 9 0 10" fill="none" stroke="#f39c2b" strokeWidth="1.500" strokeDasharray="3 2" /></Tiny>
              <Tiny c="#2f78c4" s={10}><rect x="1" y="3" width="10" height="6" /></Tiny>
              <Tiny c="#5b93c9" s={10}><path d="M2 2l8 8M10 2l-8 8" stroke="#5b93c9" fill="none" /><circle cx="6" cy="6" r="1.500" fill="#f39c2b" /></Tiny>
              <Tiny c="#2f78c4" s={10}><ellipse cx="6" cy="6" rx="5" ry="4" /></Tiny>
              <Tiny c="#5b93c9" s={10}><path d="M3 1v8h8M1 3h8v8" fill="none" stroke="#5b93c9" /></Tiny>
            </SmallShapes>
          </GroupBody>
          <GroupLabel><span /><span>基本工具</span><span /></GroupLabel>
        </Group>
        <Group $w={119}>
          <GroupBody>
            <TriCols>
              <LabelledTool><FrontIcon />置于顶层<Caret /></LabelledTool>
              <LabelledTool $off><Tiny c="#bbb"><path d="M2 2h2v2H2zM8 2h2v2H8zM2 8h2v2H2zM8 8h2v2H8z" /></Tiny>组合<Caret /></LabelledTool>
              <LabelledTool $off><Tiny c="#aaa"><rect x="1" y="1" width="3" height="10" /><rect x="6" y="1" width="3" height="10" /></Tiny>大小<Caret /></LabelledTool>
              <LabelledTool><BackIcon />置于底层<Caret /></LabelledTool>
              <LabelledTool><Tiny><rect x="1" y="1" width="1" height="10" fill="#777" /><rect x="3" y="2" width="6" height="3" fill="#d9534f" /><rect x="3" y="7" width="4" height="3" fill="#2f78c4" /></Tiny>对齐<Caret /></LabelledTool>
              <LabelledTool><Tiny><rect x="1.500" y="1.500" width="9" height="9" fill="none" stroke="#5b93c9" /><circle cx="6" cy="6" r="2" fill="none" stroke="#5b93c9" /></Tiny>居中</LabelledTool>
              <LabelledTool><Tiny c="#d9607c"><path d="M1 6l10-4-4 9-1-4z" /></Tiny>旋转和镜像<Caret /></LabelledTool>
              <LabelledTool $off><Tiny c="#bbb"><path d="M1 2h10v8H1zM4.500 2v8M7.500 2v8" fill="none" stroke="#bbb" /></Tiny>分布<Caret /></LabelledTool>
              <LabelledTool><Tiny c="#f0b020"><rect x="2" y="5" width="8" height="6" /><path d="M4 5V3a2 2 0 0 1 4 0v2" fill="none" stroke="#f0b020" strokeWidth="1.300" /></Tiny>保护<Caret /></LabelledTool>
            </TriCols>
          </GroupBody>
          <GroupLabel><span /><span>排列</span><span /></GroupLabel>
        </Group>
        <Group $w={235}>
          <GroupBody>
            <StyleRow>
              {["#b0e0cc", "#b0d0f0", "#b8dce8", "#f8c8b8", "#fbd8a8", "#f4c0d4", "#c0ccd8"].map((c) => (
                <StyleBox key={c} $c={c}>Abc</StyleBox>
              ))}
            </StyleRow>
            <StyleScroll><StyleDot $up /><StyleDot /><StyleDot /></StyleScroll>
            <VSep />
            <ToolCol $pad="2px 0 0 6px">
              <LabelledTool><PaintIcon s={8} />填充<Caret /></LabelledTool>
              <LabelledTool><LineIcon s={8} />线条<Caret /></LabelledTool>
              <LabelledTool><Tiny c="#6fcfc3"><rect width="12" height="12" /></Tiny>阴影<Caret /></LabelledTool>
            </ToolCol>
          </GroupBody>
          <GroupLabel><span /><span>样式</span><Launcher /></GroupLabel>
        </Group>
        <Group $w={56}>
          <GroupBody>
            <ToolCol $pad="2px 0 0 5px">
              <LabelledTool><Tiny c="#2a5a8c"><path d="M1 11V5l2-3h2v3h2V2h2l2 3v6H8V7H4v4z" /></Tiny>查找 &amp; 替换</LabelledTool>
              <LabelledTool><Tiny><path d="M2 1h6l2 2v8H2z" fill="#fff" stroke="#7ba4cf" /><path d="M3 9l2 2 5-6" stroke="#3aa5d0" fill="none" /></Tiny>拼写检查</LabelledTool>
              <LabelledTool><Tiny c="#2f78c4"><rect x="1" y="2" width="3" height="8" /><path d="M4 6h4" stroke="#e9a23b" /><rect x="8" y="4" width="3" height="4" fill="#e9a23b" /></Tiny>替换形状<Caret /></LabelledTool>
            </ToolCol>
          </GroupBody>
          <GroupLabel><span /><span>编辑</span><span /></GroupLabel>
        </Group>
        <Group />
      </Ribbon>
      <Workspace>
        <LeftPanel>
          <PanelHead>符号库<X size={8} color="#666" /></PanelHead>
          <SearchRow>
            <svg width="12" height="10" viewBox="0 0 12 10"><rect x="0" y="1" width="3" height="3.500" fill="#3c8fd6" /><rect x="3.500" y="1" width="3" height="3.500" fill="#e9a23b" /><rect x="0" y="5" width="3" height="3.500" fill="#d9534f" /><rect x="3.500" y="5" width="3" height="3.500" fill="#3aa55c" /><path d="M8 4h3L9.500 6z" fill="#777" /></svg>
            <SearchBox><Caret /></SearchBox>
            <SearchGlyph size={9} color="#2f78c4" strokeWidth={3} />
          </SearchRow>
          <CatList>
            {["常用形状", "基本绘图形状", "2D框图", "图标"].map((t) => (
              <CatRow key={t}><CatIcon /><CatName>{t}</CatName><X size={6} color="#666" strokeWidth={3} /></CatRow>
            ))}
          </CatList>
          <SymbolArea>
            <SymbolGrid>
              {symbols.map((s) => (
                <SymbolCell key={s.label}>
                  <SymbolIcon>{s.icon}</SymbolIcon>
                  <SymbolLabel>{s.label}</SymbolLabel>
                </SymbolCell>
              ))}
            </SymbolGrid>
            <VScroll>
              <ScrollBtn><StyleDot $up /></ScrollBtn>
              <ScrollThumb $mt={1} $h={39} />
              <ScrollBtn $end><StyleDot /></ScrollBtn>
            </VScroll>
          </SymbolArea>
          <BottomTabs>
            <BottomTab $on>符号库</BottomTab>
            <BottomTab>文件恢复</BottomTab>
          </BottomTabs>
        </LeftPanel>
        <Centre>
          <DocTabs>
            <DocTab $w={40} $pl={2}><DocIcon />绘图1<DocClose size={6} $ml={5} /></DocTab>
            <DocTab $w={83} $on $pl={4}><DocIcon />Arrow Diagram 1<DocClose size={6} $ml={3} /></DocTab>
          </DocTabs>
          <RulerH>
            {hRuler.map((n, i) => <RulerCell key={i}>{n}</RulerCell>)}
          </RulerH>
          <Middle>
            <RulerV>
              {vRuler.map((n, i) => <RulerVCell key={i}>{n}</RulerVCell>)}
            </RulerV>
            <CanvasArea>
              <Page>
                <Diagram />
                <TitleFrame><TitleText>Add Your Title Here</TitleText></TitleFrame>
                <SubTitle>{"Replace your text here!   Replace your text here!"}</SubTitle>
                <Callout $x={238} $y={255}>{LOREM}</Callout>
                <Callout $x={606} $y={192}>{LOREM}</Callout>
                <Callout $x={254} $y={401}>{LOREM}</Callout>
                <Callout $x={620} $y={401}>{LOREM}</Callout>
                <StepNum $x={434} $y={336}>01</StepNum>
                <StepNum $x={468} $y={336}>02</StepNum>
                <StepNum $x={468} $y={366}>03</StepNum>
                <StepNum $x={434} $y={366}>04</StepNum>
              </Page>
            </CanvasArea>
            <VScroll $mr={2}>
              <ScrollThumb $mt={49} $h={331} />
              <ScrollBtn $end><StyleDot /></ScrollBtn>
            </VScroll>
          </Middle>
          <HScrollRow>
            <HArrow><StyleDot $up $turn={-90} /></HArrow>
            <HThumb />
            <HArrow><StyleDot $up $turn={90} /></HArrow>
          </HScrollRow>
          <PageBar>
            <ChevronUp size={9} color="#3f62b8" strokeWidth={3} />
            <PageCombo><span>Page-1</span><Caret /></PageCombo>
            <PagePlus size={9} color="#28b04a" strokeWidth={4} />
            <PageName>Page-1</PageName>
          </PageBar>
          <PaletteRow>
            <PaletteLabel>填充</PaletteLabel>
            {palette.map((c, i) => <Swatch key={i} $c={c} />)}
          </PaletteRow>
          <MiniBar>
            <MiniLeft>
              <MiniSel><svg width="8" height="9" viewBox="0 0 15 17"><path d="M2 1l11 8-5 .5 3 6-2 1-3-6-4 3z" fill="#8fa5bb" /></svg></MiniSel>
              <FmtBtn $w={14}><Tiny c="#555" s={10}><path d="M1 2v5h9" fill="none" stroke="#666" /><circle cx="1.500" cy="2" r="1" fill="#2f78c4" /><circle cx="10" cy="7" r="1" fill="#2f78c4" /></Tiny></FmtBtn>
            </MiniLeft>
            <MiniRight>
              <MiniRow>
                <Tiny c="#555"><rect x="1" y="1" width="10" height="2" /><rect x="1" y="5" width="7" height="2" /><rect x="1" y="9" width="10" height="2" /></Tiny>
                <Caret $mr={2} />
                <Combo $w={47} $h={12}><span>Arial</span><Caret /></Combo>
                <Combo $w={20} $h={12}><span>32</span><Caret /></Combo>
              </MiniRow>
              <MiniRow>
                <FmtBtn $w={11}>A<Mini>▲</Mini></FmtBtn>
                <FmtBtn $w={11}>A<Mini>▼</Mini></FmtBtn>
                <FmtBtn $w={11} $on $bold>B</FmtBtn>
                <FmtBtn $w={11} $it>I</FmtBtn>
                <FmtBtn $w={11} $u>U</FmtBtn>
                <FmtBtn $w={11} $strike>abc</FmtBtn>
                <FmtBtn $w={14} $sans $u>A<Caret /></FmtBtn>
              </MiniRow>
            </MiniRight>
            <MiniClose>×</MiniClose>
          </MiniBar>
        </Centre>
        <RightPanel>
          <RightHead>填充<X size={8} color="#666" /></RightHead>
          <RightBody>
            <Strip>
              <StripBtn $on><PaintIcon s={13} /></StripBtn>
              <StripBtn><LineIcon s={13} /></StripBtn>
              <StripBtn><Tiny s={13} c="#6fcfc3"><rect width="12" height="12" /></Tiny></StripBtn>
              <StripBtn><Tiny s={13}><rect x="1" y="2" width="10" height="8" fill="#bfe0ea" /><path d="M1 8l4-4 3 2 3-1v5H1z" fill="#4a9a7c" /></Tiny></StripBtn>
              <StripBtn><Tiny s={13}><rect x="1" y="1" width="8" height="8" fill="#3a6ca5" /><rect x="3" y="3" width="8" height="8" fill="#f2c879" /></Tiny></StripBtn>
              <StripBtn><Tiny s={13}><rect x="2" y="1" width="8" height="10" fill="#fff" stroke="#5b93c9" /><path d="M3.500 3.500h5M3.500 5.500h5M3.500 7.500h5" stroke="#3a6ca5" /></Tiny></StripBtn>
              <StripBtn><Tiny s={13}><circle cx="5.500" cy="5.500" r="4.500" fill="#2f78c4" /><path d="M3 3l3 2-1 3" stroke="#fff" fill="none" /><ellipse cx="9" cy="9.500" rx="2.500" ry="1.500" fill="#e9c23b" /></Tiny></StripBtn>
              <StripBtn><Tiny s={13}><path d="M2 1h6l2 2v8H2z" fill="#fff" stroke="#7ba4cf" /><path d="M4 8l4-4" stroke="#5b93c9" /></Tiny></StripBtn>
              <StripBtn><Tiny s={13}><path d="M1 2h10v7H5l-2 2V9H1z" fill="#fff" stroke="#5b93c9" /><path d="M3.500 5.500h1M5.500 5.500h1M7.500 5.500h1" stroke="#5b93c9" /></Tiny></StripBtn>
              <StripBtn><Tiny s={13} c="#2f78c4"><circle cx="6" cy="6" r="5.500" /><path d="M4.500 4.500a1.600 1.600 0 1 1 2 1.600v1" stroke="#fff" fill="none" /><circle cx="6.500" cy="9" r=".7" fill="#fff" /></Tiny></StripBtn>
            </Strip>
            <FillOptions>
              {["无填充", "单色填充", "渐变填充", "单色渐变填充", "图案填充", "图片或纹理填充"].map((t, i) => (
                <FillRow key={t}><Radio $on={i === 0} />{t}</FillRow>
              ))}
            </FillOptions>
          </RightBody>
        </RightPanel>
      </Workspace>
      <StatusBar>
        <span>Rectangle</span>
        <span>形状 ID : 135</span>
        <span>宽度 : 109.921mm</span>
        <span>高度 : 9.31452mm</span>
        <span>角度 : 0deg</span>
        <StatusRight>
          <svg width="8" height="8" viewBox="0 0 8 8"><path d="M0 0h3.500v3.500H0zM4.500 0H8v3.500H4.500zM0 4.500h3.500V8H0zM4.500 4.500H8V8H4.500z" fill="#cfdbe7" /></svg>
        </StatusRight>
      </StatusBar>
      <Taskbar>
        <TaskItem $w={29}><TaskIcon kind="start" /></TaskItem>
        <TaskItem $w={33}><FaInternetExplorer size={16} color="#2a86d8" /></TaskItem>
        <TaskItem $w={30} $on><TaskIcon kind="folder" /></TaskItem>
        <TaskItem $w={34} $on><TaskIcon kind="firefox" /></TaskItem>
        <TaskItem><TaskIcon kind="note" /></TaskItem>
        <TaskItem><TaskIcon kind="paint" /></TaskItem>
        <TaskItem><TaskIcon kind="calc" /></TaskItem>
        <TaskItem><TaskIcon kind="cursor" /></TaskItem>
        <TaskItem><TaskIcon kind="bird" /></TaskItem>
        <TaskItem><TaskIcon kind="search" /></TaskItem>
        <TaskItem $w={31} $on $ml={3}><TaskIcon kind="word" /></TaskItem>
        <TaskItem $w={30} $on><TaskIcon kind="edraw" /></TaskItem>
        <Tray>
          <TrayText>CK</TrayText>
          <TrayDot $c="#d9534f" $sq />
          <TrayDot $c="#2a5a9c" />
          <TrayDot $c="#8fa3b8" />
          <TrayDot $c="#c9d3dd" $sq />
          <TrayDot $c="#8fc31f" />
          <TrayDot $c="#e8e8e8" $sq />
          <TrayDot $c="#556677" $sq />
          <TrayDot $c="#dfe5ea" />
          <Clock>21:14<br />2018/1/26</Clock>
        </Tray>
      </Taskbar>
      <Redact />
      <Mark>
        <PawSvg viewBox="0 0 60 60">
          <g fill="rgba(255,255,255,.55)" stroke="#d6d6d6" strokeWidth="1">
            <ellipse cx="22" cy="14" rx="6" ry="9" />
            <ellipse cx="41" cy="14" rx="6" ry="9" />
            <ellipse cx="7" cy="31" rx="5.500" ry="8" />
            <ellipse cx="52" cy="28" rx="5.500" ry="8" />
            <path d="M28 27C18 30 11 40 12 48c1 8 10 8 18 6 8 2 16 3 19-4 2-9-10-23-21-23z" />
          </g>
        </PawSvg>
        <MarkBai>Bai</MarkBai>
        <MarkDu>du</MarkDu>
        <MarkCn>经验</MarkCn>
        <MarkUrl>jingyan.baidu.com</MarkUrl>
      </Mark>
      <ImeTip>拼音</ImeTip>
      <ImeBar>
        <ImeCell><ImeDot $c="#d9534f" /></ImeCell>
        <ImeCell>中</ImeCell>
        <ImeCell>☽</ImeCell>
        <ImeCell>•,</ImeCell>
        <ImeCell><ImeDot $c="#777" /></ImeCell>
        <ImeCell><ImeDot $c="#555" /></ImeCell>
        <ImeCell><ImeDot $c="#444" /></ImeCell>
      </ImeBar>
    </Root>
  );
}
